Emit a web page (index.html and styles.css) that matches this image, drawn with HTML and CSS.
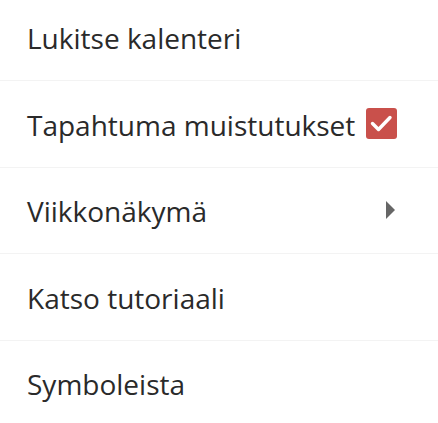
FILE: index.html
```html
<!DOCTYPE html>
<html lang="fi">
<head>
<meta charset="utf-8">
<link rel="stylesheet" href="styles.css">
</head>
<body>
<ul class="menu">
  <li class="item"><span class="label">Lukitse kalenteri</span></li>
  <li class="item"><span class="label">Tapahtuma muistutukset</span>
    <span class="check"><svg viewBox="0 0 31 31" width="31" height="31"><path d="M6.5 15.5 L12.5 21.5 L24 9.5" fill="none" stroke="#fff" stroke-width="3.4" stroke-linecap="round" stroke-linejoin="round"/></svg></span>
  </li>
  <li class="item"><span class="label">Viikkonäkymä</span><span class="arrow"></span></li>
  <li class="item"><span class="label">Katso tutoriaali</span></li>
  <li class="item"><span class="label">Symboleista</span></li>
</ul>
</body>
</html>
```
FILE: styles.css
```css
html, body {
  margin: 0;
  padding: 0;
  background: #fff;
}
.menu {
  list-style: none;
  margin: -5.5px 0 0 0;
  padding: 0;
  font-family: "Open Sans", sans-serif;
  font-size: 28px;
  color: #2a2a2a;
}
.item {
  display: flex;
  align-items: center;
  justify-content: space-between;
  height: 85.5px;
  padding: 0 40px 0 27px;
  border-bottom: 1px solid #f3f3f3;
  white-space: nowrap;
}
.item:last-child {
  border-bottom: none;
}
.label {
  line-height: 1;
  padding-top: 2px;
}
.check {
  display: flex;
  flex: none;
  width: 31px;
  height: 31px;
  background: #c9504b;
  border-radius: 3px;
  margin-right: 1px;
}
.arrow {
  flex: none;
  width: 0;
  height: 0;
  border-top: 9px solid transparent;
  border-bottom: 9px solid transparent;
  border-left: 9px solid #666;
  margin-right: 3px;
}
```
